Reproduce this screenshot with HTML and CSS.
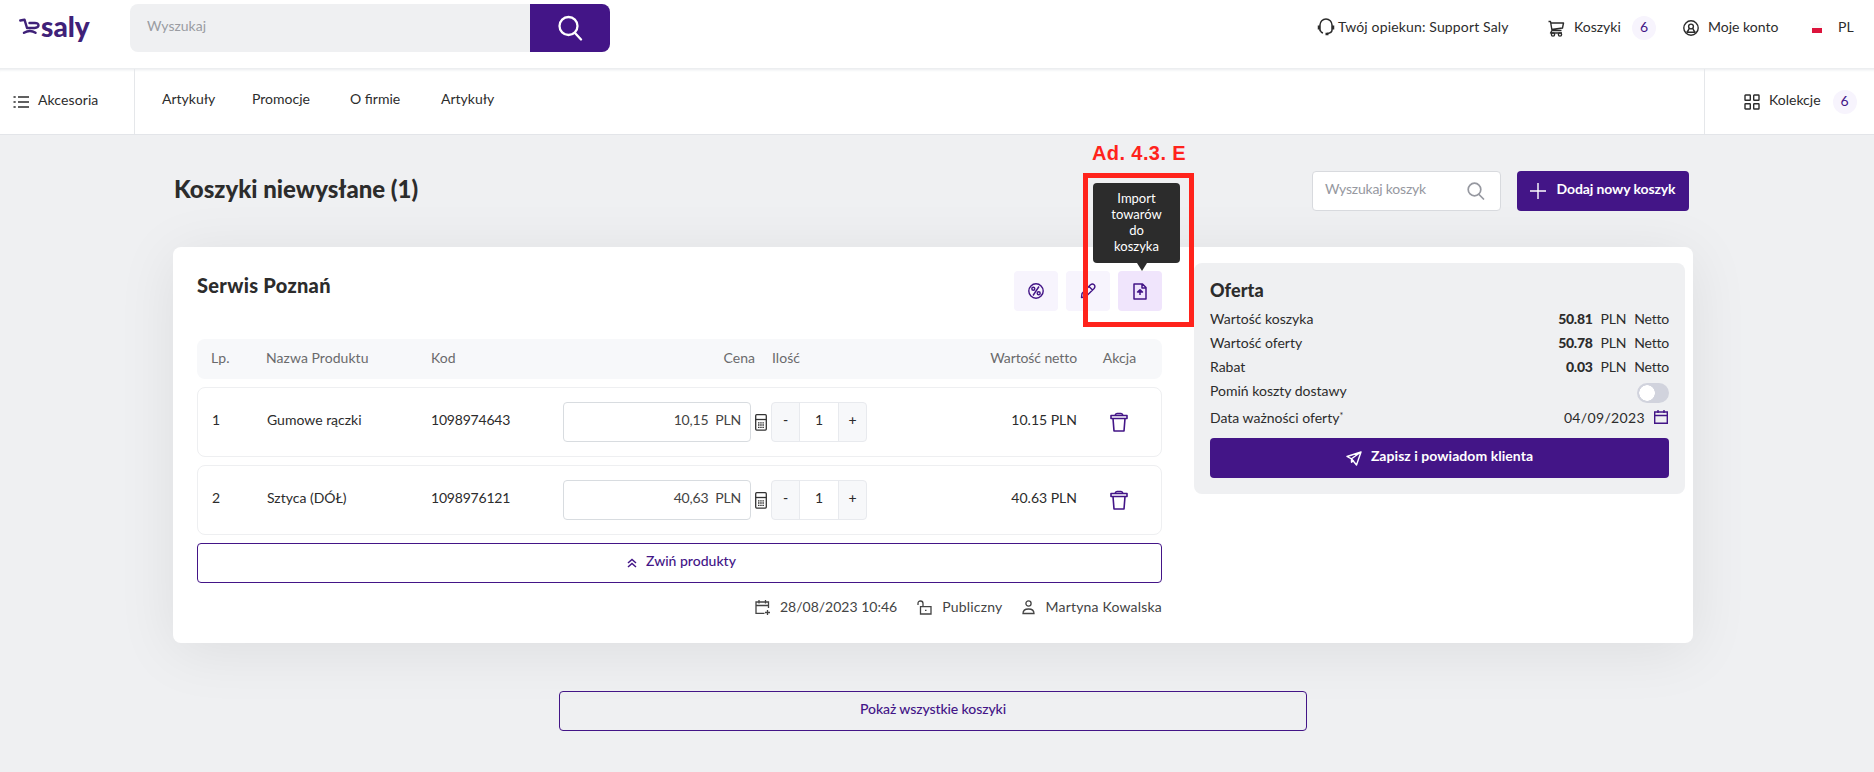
FILE: index.html
```
<!DOCTYPE html>
<html lang="pl">
<head>
    <meta charset="UTF-8">
    <meta name="viewport" content="width=device-width, initial-scale=1.0">
    <title>Koszyki - Saly</title>
    <link rel="stylesheet" href="styles.css">
</head>
<body>
    <header class="topbar">
        <a class="logo">
            <svg width="22" height="20" viewBox="0 0 22 20" fill="none" stroke="#3f2178" stroke-width="2.4" stroke-linecap="round" stroke-linejoin="round">
                <path d="M1.300 3.500 5.500 2.700 8 11h7.500q4-.3 4-2.700T15.500 6H10.500M5 15.800q6-3.500 11.500 0"/>
            </svg>
            <span>saly</span>
        </a>
        <form class="search">
            <input type="text" placeholder="Wyszukaj">
            <button type="button">
                <svg width="26" height="26" viewBox="0 0 26 26" fill="none" stroke="#fff" stroke-width="2.300" stroke-linecap="round">
                    <circle cx="11.500" cy="11" r="9"/><path d="m18 18 6 6.500"/>
                </svg>
            </button>
        </form>
        <div class="user-menu">
            <a class="guardian">
                <svg width="18" height="18" viewBox="0 0 18 18" fill="none" stroke="#2c2c2c" stroke-width="1.500">
                    <path d="M3 7a6 6 0 0 1 12 0M15 12q0 3-5 3.500M3 6.500v6h1M15 6.500v6M1.500 7.500v4M16.500 7.500v4M3 12q1 2.500 3 3"/><path d="M8.500 16h3" stroke-width="2.500"/>
                </svg>
                <span>Twój opiekun: Support Saly</span>
            </a>
            <a class="carts">
                <svg width="17" height="17" viewBox="0 0 17 17" fill="none" stroke="#2c2c2c" stroke-width="1.400" stroke-linejoin="round">
                    <path d="M.5 1.500h2l1.500 9h9.500M3 3h12.500l-1 5-11 1.500M4 10.500 2.500 13H14"/><circle cx="5" cy="14.500" r="1.600"/><circle cx="12" cy="14.500" r="1.600"/>
                </svg>
                <span>Koszyki</span>
            </a>
            <span class="badge">6</span>
            <a class="account">
                <svg width="16" height="16" viewBox="0 0 16 16" fill="none" stroke="#2c2c2c" stroke-width="1.400">
                    <circle cx="8" cy="8" r="7.200"/><circle cx="8" cy="6.500" r="2.400"/><path d="M3.500 12.500q2-1.500 2.500-4M12.500 12.500q-2-1.500-2.500-4M3.500 12.300h9"/>
                </svg>
                <span>Moje konto</span>
            </a>
            <i class="flag"></i>
            <span class="lang">PL</span>
        </div>
    </header>

    <nav class="nav">
        <a class="categories">
            <svg width="16" height="14" viewBox="0 0 16 14" stroke="#2c2c2c" stroke-width="1.600">
                <path d="M5 2h11M5 7h11M5 12h11M.5 2h2.200M.5 7h2.200M.5 12h2.200"/>
            </svg>
            <span>Akcesoria</span>
        </a>
        <div class="nav-links">
            <a class="w-articles">Artykuły</a>
            <a class="w-promo">Promocje</a>
            <a class="w-about">O firmie</a>
            <a>Artykuły</a>
        </div>
        <a class="collections">
            <svg width="16" height="16" viewBox="0 0 16 16" fill="none" stroke="#2c2c2c" stroke-width="1.400">
                <rect x="1" y="1" width="5.300" height="5.300" rx=".5"/><rect x="9.700" y="1" width="5.300" height="5.300" rx=".5"/>
                <rect x="1" y="9.700" width="5.300" height="5.300" rx=".5"/><rect x="9.700" y="9.700" width="5.300" height="5.300" rx=".5"/>
            </svg>
            <span>Kolekcje</span>
            <span class="badge">6</span>
        </a>
    </nav>

    <main class="page">
        <div class="page-head">
            <h1>Koszyki niewysłane (1)</h1>
            <div class="cart-search">
                <span>Wyszukaj koszyk</span>
                <svg width="18" height="18" viewBox="0 0 18 18" fill="none" stroke="#9698a0" stroke-width="1.700" stroke-linecap="round">
                    <circle cx="7.500" cy="7.500" r="6.300"/><path d="m12 12.500 4.500 4.500"/>
                </svg>
            </div>
            <button class="btn btn-add">
                <svg width="16" height="16" viewBox="0 0 16 16" stroke="#fff" stroke-width="1.400"><path d="M8 0v16M0 8h16"/></svg>
                <span>Dodaj nowy koszyk</span>
            </button>
        </div>

        <section class="card">
            <div class="cart">
                <div class="cart-head">
                    <h2>Serwis Poznań</h2>
                    <div class="actions">
                        <button class="icon-btn">
                            <svg width="16" height="16" viewBox="0 0 16 16" fill="none" stroke="#431587" stroke-width="1.400">
                                <circle cx="8" cy="8" r="7.200"/><circle cx="5.300" cy="5.800" r="1.500"/><circle cx="10.700" cy="10.200" r="1.500"/><path d="m11 3.500-6 9"/>
                            </svg>
                        </button>
                        <button class="icon-btn">
                            <svg width="16" height="16" viewBox="0 0 16 16" fill="none" stroke="#431587" stroke-width="1.400" stroke-linejoin="round">
                                <path d="M1.500 14.500 2 10.500l8.500-8.700q2-1.600 3.600 0t0 3.700L5.500 14zM9 3.500l3.500 3.500"/>
                            </svg>
                        </button>
                        <button class="icon-btn active">
                            <svg width="14" height="17" viewBox="0 0 14 17" fill="none" stroke="#431587" stroke-width="1.500" stroke-linejoin="round">
                                <path d="M1 1h8.500L13 4.500V16H1zM9 1v4h4M7 12V7M4.500 9 7 6.800 9.500 9z"/>
                            </svg>
                            <span class="tooltip">Import towarów do koszyka</span>
                        </button>
                        <div class="marker"><span>Ad. 4.3. E</span></div>
                    </div>
                </div>

                <div class="row row-head">
                    <span>Lp.</span>
                    <span>Nazwa Produktu</span>
                    <span>Kod</span>
                    <span class="right head-price">Cena</span>
                    <span class="head-qty">Ilość</span>
                    <span class="right">Wartość netto</span>
                    <span class="center">Akcja</span>
                </div>
                <div class="row">
                    <span>1</span>
                    <span>Gumowe rączki</span>
                    <span class="code">1098974643</span>
                    <div class="price"><span>10,15</span><span>PLN</span></div>
                    <div class="qty">
                        <svg class="calc" width="12" height="17" viewBox="0 0 12 17" fill="none" stroke="#333" stroke-width="1.300">
                            <rect x=".7" y=".7" width="10.600" height="15.400" rx="1"/><path d="M.7 5.500h10.600"/><path d="M3 8.800h6M3 11h6M3 13.300h6" stroke-dasharray="1.500 .7"/>
                        </svg>
                        <div class="stepper"><b>-</b><span>1</span><b>+</b></div>
                    </div>
                    <span class="right">10.15 PLN</span>
                    <span class="center">
                        <svg width="18" height="20" viewBox="0 0 18 20" fill="none" stroke="#431587" stroke-width="1.600" stroke-linejoin="round">
                            <path d="M1 3.500h16v3H1zM5 3.500q.5-2 2-2h4q1.500 0 2 2M3 6.500l1 12.500h10l1-12.500"/>
                        </svg>
                    </span>
                </div>
                <div class="row">
                    <span>2</span>
                    <span>Sztyca (DÓŁ)</span>
                    <span class="code">1098976121</span>
                    <div class="price"><span>40,63</span><span>PLN</span></div>
                    <div class="qty">
                        <svg class="calc" width="12" height="17" viewBox="0 0 12 17" fill="none" stroke="#333" stroke-width="1.300">
                            <rect x=".7" y=".7" width="10.600" height="15.400" rx="1"/><path d="M.7 5.500h10.600"/><path d="M3 8.800h6M3 11h6M3 13.300h6" stroke-dasharray="1.500 .7"/>
                        </svg>
                        <div class="stepper"><b>-</b><span>1</span><b>+</b></div>
                    </div>
                    <span class="right">40.63 PLN</span>
                    <span class="center">
                        <svg width="18" height="20" viewBox="0 0 18 20" fill="none" stroke="#431587" stroke-width="1.600" stroke-linejoin="round">
                            <path d="M1 3.500h16v3H1zM5 3.500q.5-2 2-2h4q1.500 0 2 2M3 6.500l1 12.500h10l1-12.500"/>
                        </svg>
                    </span>
                </div>

                <button class="btn btn-outline btn-collapse">
                    <svg width="10" height="10" viewBox="0 0 10 10" fill="none" stroke="#431587" stroke-width="1.500"><path d="m1 5 4-3.500L9 5M1 9l4-3.500L9 9"/></svg>
                    <span>Zwiń produkty</span>
                </button>

                <div class="meta">
                    <span class="meta-item">
                        <svg width="15" height="15" viewBox="0 0 15 15" fill="none" stroke="#444" stroke-width="1.300"><path d="M9.500 13.300H1V2h12.500v6M1 5.500h12.500M4 0v3.500M10.500 0v3.500M12.500 10v5M10 12.500h5"/></svg>
                        <span class="meta-date">28/08/2023 10:46</span>
                    </span>
                    <span class="meta-item">
                        <svg width="15" height="15" viewBox="0 0 15 15" fill="none" stroke="#444" stroke-width="1.300"><path d="M1 5V3.500q0-2.500 2.500-2.500T6 3.500v3M3.500 6.700H14v7.300H3.500z"/><path d="M8 10.300h1.500"/></svg>
                        <span>Publiczny</span>
                    </span>
                    <span class="meta-item">
                        <svg width="13" height="15" viewBox="0 0 13 15" fill="none" stroke="#444" stroke-width="1.300"><circle cx="6.500" cy="3.500" r="2.600"/><path d="M1 13.500q0-4.500 5.500-4.500t5.500 4.500z"/></svg>
                        <span>Martyna Kowalska</span>
                    </span>
                </div>
            </div>

            <aside class="offer">
                <h3>Oferta</h3>
                <div class="offer-row"><span>Wartość koszyka</span><span class="amount"><b>50.81</b><span>PLN</span><span>Netto</span></span></div>
                <div class="offer-row"><span>Wartość oferty</span><span class="amount"><b>50.78</b><span>PLN</span><span>Netto</span></span></div>
                <div class="offer-row"><span>Rabat</span><span class="amount"><b>0.03</b><span>PLN</span><span>Netto</span></span></div>
                <div class="offer-row"><span>Pomiń koszty dostawy</span><span class="toggle"></span></div>
                <div class="offer-row offer-date">
                    <span>Data ważności oferty<small>*</small></span>
                    <span class="date"><span>04/09/2023</span>
                        <svg width="14" height="14" viewBox="0 0 14 14" fill="none" stroke="#431587" stroke-width="1.400"><path d="M.7 2h12.600v11.300H.7zM.7 5.500h12.600M4 0v3M10 0v3"/></svg>
                    </span>
                </div>
                <button class="btn btn-save">
                    <svg width="16" height="15" viewBox="0 0 16 15" fill="none" stroke="#fff" stroke-width="1.400" stroke-linejoin="round"><path d="M15 1 1 5.500l4.500 2.300L10.500 14zM15 1 5.500 7.800v3.500l2.500-1.800"/></svg>
                    <span>Zapisz i powiadom klienta</span>
                </button>
            </aside>
        </section>

        <button class="btn btn-outline btn-all"><span>Pokaż wszystkie koszyki</span></button>
    </main>
</body>
</html>
```

FILE: styles.css
```
* {
    box-sizing: border-box;
}
body {
    margin: 0;
    height: 772px;
    overflow: hidden;
    background: #eff0f2;
    color: #2c2c2c;
    font-family: Lato, sans-serif;
    font-size: 14px;
    line-height: 20px;
}
h1, h2, h3 {
    margin: 0;
    font-weight: 900;
}
svg {
    flex: none;
    display: block;
}
button {
    font: inherit;
    border: none;
    padding: 0;
}

/* top bar */
.topbar {
    display: flex;
    height: 69px;
    padding: 4px 21px 0 19px;
    background: #fff;
    border-bottom: 1px solid #eceef0;
}
.logo {
    display: flex;
    width: 111px;
    padding-top: 13px;
    color: #3f2178;
    font-size: 28px;
    font-weight: 900;
    line-height: 18px;
}
.search {
    display: flex;
    width: 480px;
    height: 48px;
    border-radius: 8px;
    overflow: hidden;
}
.search input {
    width: 400px;
    padding: 0 17px 4px;
    border: none;
    background: #eff0f2;
    font: inherit;
}
.search input::placeholder {
    color: #9a9ca2;
}
.search button {
    display: flex;
    flex: 1;
    align-items: center;
    justify-content: center;
    background: #431587;
}
.user-menu {
    display: flex;
    align-items: center;
    height: 48px;
    margin-left: auto;
}
.user-menu a {
    display: flex;
    align-items: center;
}
.user-menu span:not(.badge) {
    padding-bottom: 3px;
}
.guardian {
    width: 231px;
    gap: 3px;
    letter-spacing: .15px;
}
.guardian svg {
    margin-top: -3px;
}
.carts {
    width: 84px;
    gap: 9px;
}
.badge {
    display: block;
    width: 24px;
    height: 24px;
    border-radius: 50%;
    background: #f7f4fd;
    color: #431587;
    line-height: 22px;
    text-align: center;
}
.account {
    width: 129px;
    margin-left: 27px;
    gap: 9px;
}
.flag {
    width: 10px;
    height: 10px;
    margin: 0 16px 1px 0;
    background: linear-gradient(#fafafa 50%, #dc143c 50%);
}
.lang {
    width: 15px;
}

/* navigation */
.nav {
    display: flex;
    height: 66px;
    background: #fff;
    border-bottom: 1px solid #e3e5e9;
    box-shadow: inset 0 3px 3px -2px #e9ebee;
}
.categories {
    display: flex;
    align-items: center;
    gap: 9px;
    width: 135px;
    padding-left: 13px;
    border-right: 1px solid #e5e7ea;
    letter-spacing: .1px;
}
.categories span,
.collections > span:not(.badge) {
    padding-bottom: 4px;
}
.nav-links {
    display: flex;
    flex: 1;
    align-items: center;
    padding: 0 0 5px 27px;
}
.w-articles {
    width: 90px;
}
.w-promo {
    width: 98px;
}
.w-about {
    width: 91px;
}
.collections {
    display: flex;
    align-items: center;
    width: 170px;
    padding-left: 39px;
    border-left: 1px solid #e5e7ea;
}
.collections span {
    margin-left: 9px;
}
.collections .badge {
    margin: 0 0 0 12px;
}

/* page */
.page {
    width: 1520px;
    margin-left: 173px;
}
.page-head {
    display: flex;
    align-items: center;
    height: 40px;
    margin: 36px 4px 36px 1px;
}
.page-head h1 {
    margin-right: auto;
    padding-bottom: 5px;
    font-size: 24px;
    line-height: 30px;
}
.cart-search {
    display: flex;
    align-items: center;
    justify-content: space-between;
    width: 189px;
    height: 40px;
    margin-right: 16px;
    padding: 0 15px 0 12px;
    border: 1px solid #d8dade;
    border-radius: 4px;
    background: #fff;
    color: #9698a0;
    letter-spacing: -.2px;
}
.cart-search span,
.btn span {
    padding-bottom: 4px;
}
.btn {
    display: flex;
    align-items: center;
    justify-content: center;
    height: 40px;
    border-radius: 4px;
    background: #431587;
    color: #fff;
    font-weight: 700;
}
.btn-add {
    width: 172px;
    gap: 10px;
    letter-spacing: -.1px;
}
.btn-outline {
    border: 1px solid #431587;
    background: transparent;
    color: #431587;
    font-weight: 500;
}
.card {
    display: flex;
    height: 396px;
    padding: 16px 8px 0 24px;
    border-radius: 8px;
    background: #fff;
    box-shadow: 0 8px 60px rgba(0, 0, 0, .08);
}
.cart {
    width: 965px;
    margin-right: 32px;
}
.cart-head {
    display: flex;
    justify-content: space-between;
    height: 76px;
    padding-top: 8px;
}
.cart-head h2 {
    font-size: 20px;
    line-height: 28px;
    letter-spacing: .3px;
}
.actions {
    display: flex;
    position: relative;
    gap: 8px;
}
.icon-btn {
    display: flex;
    position: relative;
    align-items: center;
    justify-content: center;
    width: 44px;
    height: 40px;
    border-radius: 4px;
    background: #f7f4fd;
}
.icon-btn.active {
    background: #f0e5fc;
}
.tooltip {
    position: absolute;
    bottom: 48px;
    left: -25px;
    width: 87px;
    height: 80px;
    padding: 7px 15px;
    border-radius: 4px;
    background: #2c2c2c;
    color: #fff;
    font-size: 13px;
    line-height: 16px;
}
.tooltip::after {
    content: "";
    position: absolute;
    top: 80px;
    left: 44px;
    border: 5px solid transparent;
    border-top: 8px solid #2c2c2c;
    border-bottom: none;
}
.marker {
    position: absolute;
    top: -98px;
    left: 69px;
    width: 111px;
    height: 154px;
    border: 5px solid #ff231c;
}
.marker span {
    position: absolute;
    top: -37px;
    left: 4px;
    color: #ff231c;
    font: bold 20px/24px "Liberation Sans", sans-serif;
    letter-spacing: .4px;
    white-space: nowrap;
}

/* products */
.row {
    display: grid;
    grid-template-columns: 55px 165px 131px 188px 193px 133px 86px;
    align-items: center;
    height: 70px;
    margin-bottom: 8px;
    padding-left: 14px;
    border: 1px solid #eeeff1;
    border-radius: 8px;
}
.row > span {
    padding-bottom: 4px;
}
.row .code {
    margin-left: -1px;
    letter-spacing: -.2px;
}
.row-head {
    height: 40px;
    border: none;
    background: #f7f8fa;
    color: #6a6a6c;
}
.row-head span {
    padding-bottom: 3px;
    letter-spacing: .05px;
}
.row-head .right:not(.head-price) {
    margin-right: -1px;
    letter-spacing: -.1px;
}
.row .center {
    display: flex;
    justify-content: center;
    padding-right: 0;
    margin-left: 1px;
}
.row:not(.row-head) .center {
    padding: 0 4px 0 0;
}
.right {
    text-align: right;
}
.row-head .head-price {
    margin-right: -5px;
}
.row-head .head-qty {
    padding-left: 22px;
}
.price {
    display: flex;
    align-items: center;
    justify-content: flex-end;
    gap: 7px;
    height: 40px;
    padding: 0 9px 4px 0;
    border: 1px solid #d8dce0;
    border-radius: 4px;
    color: #444;
    letter-spacing: -.2px;
}
.qty {
    display: flex;
    align-items: center;
    gap: 4px;
    padding-left: 4px;
}
.stepper {
    display: flex;
    width: 96px;
    height: 40px;
    border: 1px solid #e8eaee;
    border-radius: 4px;
    background: #f7f8fa;
    line-height: 34px;
    text-align: center;
}
.stepper b {
    flex: 1;
    font-weight: 500;
}
.stepper span {
    width: 40px;
    border: solid #e8eaee;
    border-width: 0 1px;
    background: #fff;
}
.btn-collapse {
    width: 100%;
    padding-left: 4px;
    gap: 9px;
}
.meta {
    display: flex;
    justify-content: flex-end;
    gap: 20px;
    height: 48px;
    align-items: center;
    color: #444;
    letter-spacing: .2px;
}
.meta-date {
    letter-spacing: 0;
}
.meta-item {
    display: flex;
    align-items: center;
    gap: 10px;
}

/* offer */
.offer {
    width: 491px;
    height: 231px;
    padding: 15px 16px 16px;
    border-radius: 8px;
    background: #eff0f2;
}
.offer h3 {
    height: 31px;
    font-size: 18px;
    line-height: 24px;
    letter-spacing: .1px;
}
.offer-row {
    display: flex;
    justify-content: space-between;
    height: 24px;
}
.amount {
    display: flex;
    gap: 8px;
    letter-spacing: -.2px;
}
.amount b {
    font-weight: 900;
    letter-spacing: -.3px;
}
.toggle {
    width: 32px;
    height: 20px;
    margin-top: 2px;
    border: 2px solid #d1d3dd;
    border-radius: 10px;
    background: radial-gradient(circle at 8px 8px, #fff 7.500px, #d1d3dd 8px);
}
.offer-date {
    height: 33px;
    padding-top: 3px;
}
.offer-date small {
    font-size: 9px;
    vertical-align: 4px;
    line-height: 1px;
}
.date {
    display: flex;
    gap: 9px;
    padding-right: 1px;
    letter-spacing: .35px;
}
.date svg {
    margin-top: 2px;
}
.btn-save {
    width: 100%;
    gap: 9px;
    letter-spacing: .05px;
}
.btn-all {
    width: 748px;
    margin: 48px 0 0 386px;
    letter-spacing: -.1px;
}
```
